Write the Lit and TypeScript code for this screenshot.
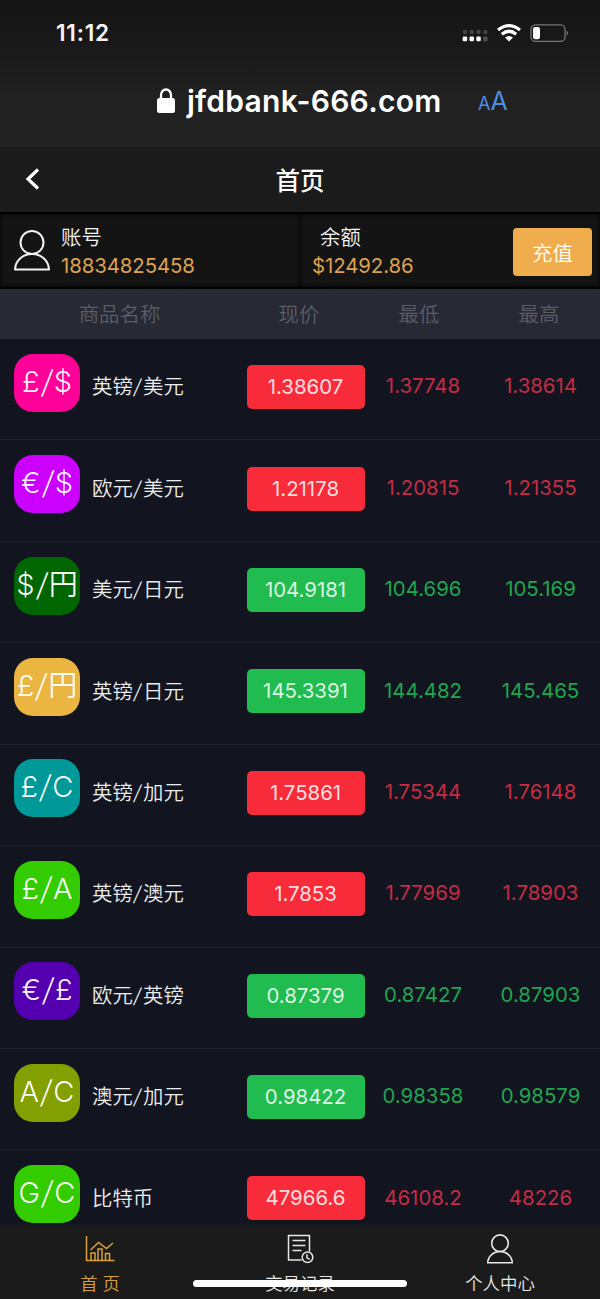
import { LitElement, html, css, svg } from "lit";
import { customElement } from "lit/decorators.js";
import { classMap } from "lit/directives/class-map.js";
import { styleMap } from "lit/directives/style-map.js";

interface Quote {
  badge: string;
  color: string;
  name: string;
  price: string;
  low: string;
  high: string;
  up: boolean;
}

const QUOTES: Quote[] = [
  { badge: "£/$", color: "#ff0099", name: "英镑/美元", price: "1.38607", low: "1.37748", high: "1.38614", up: false },
  { badge: "€/$", color: "#cc00ff", name: "欧元/美元", price: "1.21178", low: "1.20815", high: "1.21355", up: false },
  { badge: "$/円", color: "#006600", name: "美元/日元", price: "104.9181", low: "104.696", high: "105.169", up: true },
  { badge: "£/円", color: "#ebb541", name: "英镑/日元", price: "145.3391", low: "144.482", high: "145.465", up: true },
  { badge: "£/C", color: "#009999", name: "英镑/加元", price: "1.75861", low: "1.75344", high: "1.76148", up: false },
  { badge: "£/A", color: "#33cc00", name: "英镑/澳元", price: "1.7853", low: "1.77969", high: "1.78903", up: false },
  { badge: "€/£", color: "#5500b0", name: "欧元/英镑", price: "0.87379", low: "0.87427", high: "0.87903", up: true },
  { badge: "A/C", color: "#839f00", name: "澳元/加元", price: "0.98422", low: "0.98358", high: "0.98579", up: true },
  { badge: "G/C", color: "#33cc00", name: "比特币", price: "47966.6", low: "46108.2", high: "48226", up: false },
];

const person = (w: number, h: number, stroke: number) => html`
  <svg width=${w} height=${h} viewBox="0 0 36 41" fill="none" stroke="currentColor" stroke-width=${stroke} stroke-linejoin="round">
    <circle cx="18" cy="12.5" r="11.5" />
    <path d="M1 39.5C1.500 30 9 24 18 24S34.500 30 35 39.500Z" />
  </svg>`;

/* Currency pairs are set with a wide, strongly slanted slash. */
const pair = (text: string) => {
  const [base, quote] = text.split("/");
  return quote ? html`${base}<span class="slash">/</span>${quote}` : html`${base}`;
};

@customElement("app-root")
export class AppRoot extends LitElement {
  static styles = css`
    :host {
      display: flex;
      flex-direction: column;
      width: 600px;
      height: 1299px;
      overflow: hidden;
      position: relative;
      background: #12151f;
      color: #f4f4f4;
      font-family: Inter, "Noto Sans CJK SC", sans-serif;
      font-size: 20.4px;
      line-height: 1;
      white-space: nowrap;
    }
    * { box-sizing: border-box; }
    svg { display: block; flex: none; }
    .browser {
      flex: none;
      height: 147px;
      background: linear-gradient(#151515, #1a1a1a 40%, #212121 65%, #232323);
    }
    .status {
      height: 66px;
      padding: 0 31px 0 56px;
      display: flex;
      align-items: center;
      justify-content: space-between;
    }
    .time { font-size: 22.6px; font-weight: 600; letter-spacing: 0.8px; }
    .signals { display: flex; align-items: center; }
    .address {
      height: 70px;
      padding: 0 0 0 157px;
      display: flex;
      align-items: center;
      color: #fff;
    }
    .url { font-size: 30px; font-weight: 600; width: 254px; margin-left: 12px; letter-spacing: 0.27px; }
    .aa { color: #4c8fe6; font-size: 25px; margin-left: 37px; display: flex; align-items: baseline; }
    .aa small { font-size: 18px; }
    .title {
      flex: none;
      height: 65px;
      background: #1b1b1b;
      display: grid;
      grid-template-columns: 64px 1fr 64px;
      align-items: center;
      text-align: center;
      font-size: 24.5px;
      font-weight: 500;
      color: #fff;
    }
    .title svg { margin: 0 0 2px 25px; }
    .title span { padding-top: 3px; }
    .account {
      flex: none;
      height: 77px;
      display: grid;
      grid-template-columns: 300px 300px;
      background: #141414;
      border-top: 2px solid #000;
      border-bottom: 2px solid #000;
    }
    .cell {
      display: flex;
      align-items: center;
      box-shadow: inset 0 0 4px #000;
    }
    .user { padding-left: 14px; gap: 11px; }
    .funds { padding: 0 8px 0 12px; justify-content: space-between; }
    .pair { display: flex; flex-direction: column; gap: 7px; padding-top: 3px; }
    .funds .label { padding-left: 8px; }
    .label { font-weight: 350; }
    .amount { color: #dda152; letter-spacing: -0.1px; }
    .recharge {
      width: 79px;
      height: 48px;
      margin-top: 2px;
      padding-top: 5px;
      border-radius: 4px;
      background: #efad4d;
      color: #fff;
      font-weight: 350;
      display: grid;
      place-items: center;
    }
    .head {
      flex: none;
      height: 50px;
      padding-top: 2px;
      display: grid;
      grid-template-columns: 239px 120px 120px 120px;
      align-items: center;
      text-align: center;
      background: #272935;
      color: #5c5d65;
      font-weight: 350;
    }
    .list { flex: 1; min-height: 0; overflow: hidden; }
    .row {
      height: 101.43px;
      border-bottom: 1px solid #20232c;
      padding-left: 14px;
      display: grid;
      grid-template-columns: 66px 167px 118px 117px 118px;
      align-items: start;
    }
    .slash { display: inline-block; transform: skewX(-10deg); margin: 0 1.6px; }
    .badge {
      width: 66px;
      height: 58px;
      margin-top: 14.8px;
      border-radius: 19px;
      color: rgba(255, 255, 255, 0.97);
      font-size: 29px;
      font-weight: 350;
      line-height: 56px;
      display: flex;
      justify-content: center;
    }
    .badge .slash { margin: 0 2px; transform: skewX(-8deg) scaleY(1.08); }
    .name { padding-left: 12px; margin-top: 38.3px; color: #eceded; font-weight: 350; }
    .price {
      width: 118px;
      height: 44px;
      margin-top: 26.1px;
      border-radius: 5px;
      line-height: 44.500px;
      text-align: center;
      padding-right: 1px;
      color: rgba(255, 255, 255, 0.86);
      background: #f82b3b;
    }
    .up .price { background: #20bc50; }
    .num { margin-top: 37.3px; padding-right: 1px; text-align: center; color: #c42c45; }
    .up .num { color: #20a54e; }
    .nav {
      flex: none;
      height: 74px;
      background: #1b1b1b;
      display: grid;
      grid-template-columns: 200px 200px 200px;
      font-size: 17.4px;
      font-weight: 350;
      color: #e8e8e8;
    }
    .tab {
      display: grid;
      grid-template-rows: 47px 22px;
      justify-items: center;
      align-items: center;
    }
    .tab span { padding-top: 1px; }
    .active { color: #d9a13c; }
    .indicator {
      position: absolute;
      left: 193px;
      bottom: 12px;
      width: 214px;
      height: 7px;
      border-radius: 4px;
      background: #fff;
    }
  `;

  render() {
    return html`
      <div class="browser">
        <div class="status">
          <span class="time">11:12</span>
          <div class="signals">
            <svg width="107" height="24" viewBox="0 0 107 24">
              ${[0, 1, 2, 3].map((i) => svg`
                <rect x=${1 + i * 6.8} y="9" width="4" height="4" rx="1" fill="#434343" />
                <rect x=${0.7 + i * 6.8} y="15.500" width="4.500" height="4.800" rx="1.200" fill=${i < 3 ? "#fff" : "#505050"} />`)}
              <g fill="none" stroke="#fff" stroke-width="3.200">
                <path d="M36 9Q47 .300 58 9" />
                <path d="M39.800 13.200Q47 7.300 54.200 13.200" />
              </g>
              <path d="M43 16.500Q47 13.500 51 16.500L47 20.500Z" fill="#fff" />
              <rect x="69" y="3.800" width="34" height="16.600" rx="4.500" fill="none" stroke="#777" stroke-width="1.300" />
              <rect x="71" y="6" width="7" height="12.300" rx="2.200" fill="#fff" />
              <path d="M104.600 9.500q3 2.500 0 5Z" fill="#777" />
            </svg>
          </div>
        </div>
        <div class="address">
          <svg width="18" height="26" viewBox="0 0 18 26">
            <path d="M4 12V7a5 5.500 0 0 1 10 0v5" fill="none" stroke="#fff" stroke-width="2.300" />
            <rect x="0" y="10" width="18" height="15" rx="2.500" fill="#fff" />
          </svg>
          <span class="url">jfdbank-666.com</span>
          <span class="aa"><small>A</small>A</span>
        </div>
      </div>
      <div class="title">
        <svg width="15" height="22" viewBox="0 0 15 22" fill="none" stroke="#fff" stroke-width="3.200"><path d="M13 1.500L3 11l10 9.500" /></svg>
        <span>首页</span>
      </div>
      <div class="account">
        <div class="cell user">
          ${person(36, 41, 2)}
          <div class="pair"><span class="label">账号</span><span class="amount">18834825458</span></div>
        </div>
        <div class="cell funds">
          <div class="pair"><span class="label">余额</span><span class="amount">$12492.86</span></div>
          <div class="recharge">充值</div>
        </div>
      </div>
      <div class="head"><span>商品名称</span><span>现价</span><span>最低</span><span>最高</span></div>
      <div class="list">
        ${QUOTES.map((q) => html`
          <div class=${classMap({ row: true, up: q.up })}>
            <span class="badge" style=${styleMap({ background: q.color })}>${pair(q.badge)}</span>
            <span class="name">${pair(q.name)}</span>
            <span class="price">${q.price}</span>
            <span class="num">${q.low}</span>
            <span class="num">${q.high}</span>
          </div>`)}
      </div>
      <div class="nav">
        <div class="tab active">
          <svg width="30" height="26" viewBox="0 0 30 26" fill="none" stroke="currentColor" stroke-width="1.500">
            <path d="M1.500 0v24.500H29.500M6 24v-7h4v7M13 24V13h4v11M20.500 24v-6.500h4V24M5.500 14l8-7.500 8 6 6.500-5.500" />
          </svg>
          <span>首 页</span>
        </div>
        <div class="tab">
          <svg width="27" height="30" viewBox="0 0 27 30" fill="none" stroke="currentColor" stroke-width="1.500">
            <path d="M14.500 26H1.500V1.500h21V17.500M5.500 6.500h13M5.500 11.500h13M5.500 16.500h9" />
            <circle cx="20.500" cy="23.300" r="5.300" />
            <path d="M20 20.300v3.500l2.700 1.500" />
          </svg>
          <span>交易记录</span>
        </div>
        <div class="tab">
          ${person(26, 30, 2.2)}
          <span>个人中心</span>
        </div>
      </div>
      <div class="indicator"></div>
    `;
  }
}
